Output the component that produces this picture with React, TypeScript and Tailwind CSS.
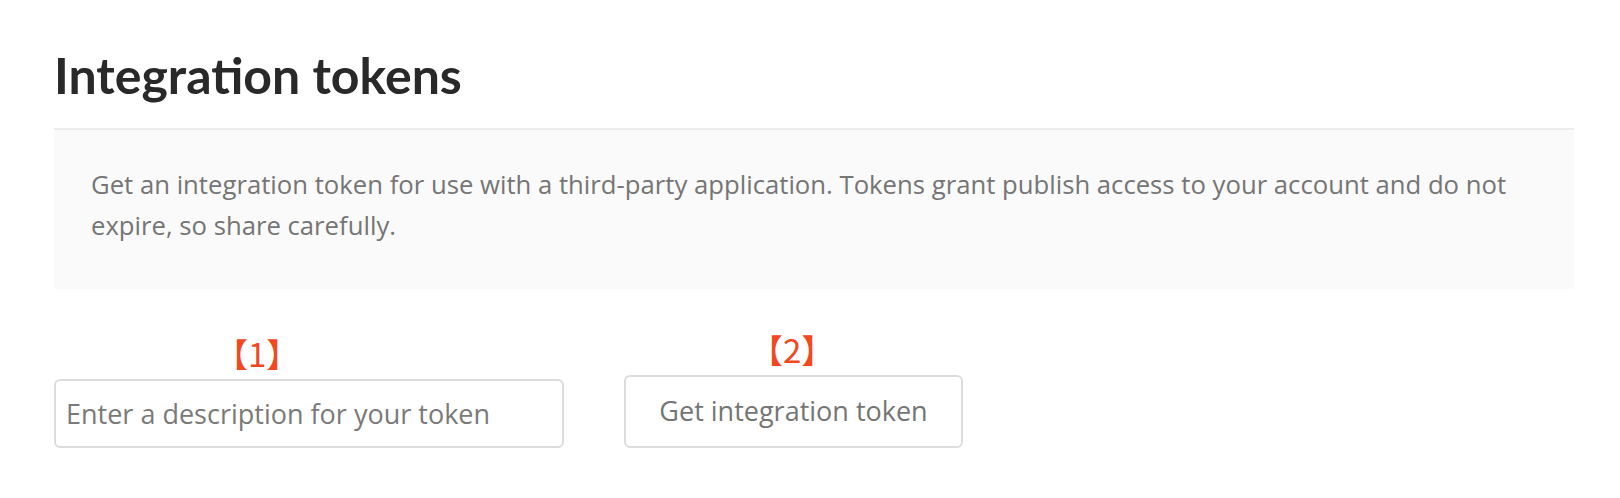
import React from 'react';

export default function App() {
  return (
    <div className="w-[1620px] h-[498px] bg-white pl-[54px] pr-[46px] pt-[45px] font-['Open_Sans',sans-serif]">
      {/* Title */}
      <h1 className="text-[50px] leading-[60px] font-bold text-[#292929] font-['Lato',sans-serif]">Integration tokens</h1>

      {/* Info box */}
      <div className="mt-[23px] border-t-2 border-[#ececec] bg-[#fafafa] h-[161px] pl-[37px] pr-[37px] pt-[34px]">
        <p className="text-[25.7px] leading-[41px] text-[#757575]">
          Get an integration token for use with a third-party application. Tokens grant publish access to your account and do not expire, so share carefully.
        </p>
      </div>

      {/* Form row */}
      <div className="mt-[44px] flex items-end gap-[60px]">
        <div className="flex flex-col">
          <span className="ml-[161px] h-[42px] text-[33px] leading-[33px] text-[#f2481f] font-['Noto_Sans_CJK_SC',sans-serif]">【1】</span>
          <input
            type="text"
            placeholder="Enter a description for your token"
            className="w-[510px] h-[69px] rounded-[6px] border-2 border-[#dcdcdc] px-[10px] text-[27px] text-[#292929] placeholder:text-[#7a7a7a] outline-none"
          />
        </div>
        <div className="flex flex-col">
          <span className="ml-[126px] h-[42px] text-[33px] leading-[33px] text-[#f2481f] font-['Noto_Sans_CJK_SC',sans-serif]">【2】</span>
          <button className="w-[339px] h-[73px] rounded-[6px] border-2 border-[#dcdcdc] bg-white text-[27px] text-[#757575]">
            Get integration token
          </button>
        </div>
      </div>
    </div>
  );
}
